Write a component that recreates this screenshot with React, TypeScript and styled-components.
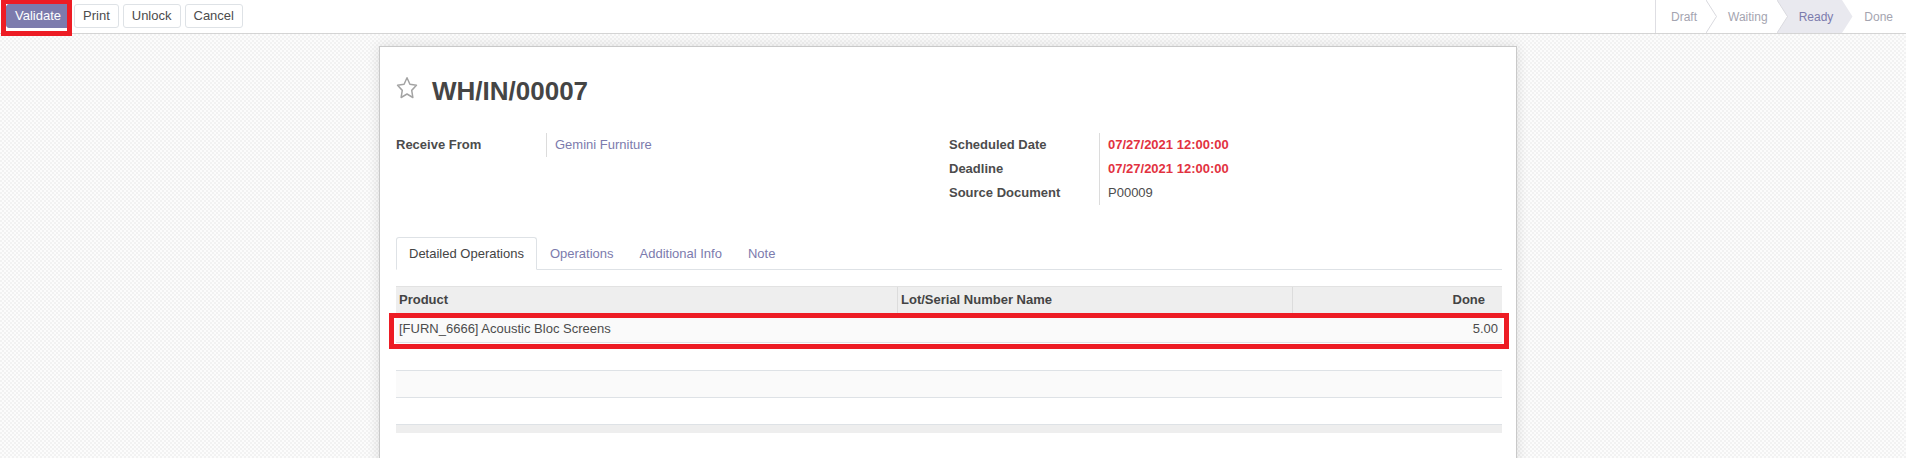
import React from "react";
import styled, { createGlobalStyle } from "styled-components";

const GlobalStyle = createGlobalStyle`
  html, body { margin: 0; padding: 0; }
  body {
    font-family: "Liberation Sans", Arial, sans-serif;
    font-size: 13px;
    color: #4c4c4c;
    background: #ffffff;
  }
  * { box-sizing: border-box; }
`;

const RED = "#ed1c24";
const PURPLE = "#7c7bad";

const Page = styled.div`
  display: flex;
  flex-direction: column;
  height: 458px;
  overflow: hidden;
`;

const ControlPanel = styled.div`
  display: flex;
  justify-content: space-between;
  align-items: stretch;
  height: 34px;
  flex-shrink: 0;
  background: #ffffff;
  border-bottom: 1px solid #d4d4d4;
  position: relative;
  z-index: 3;
`;

const ButtonBar = styled.div`
  display: flex;
  align-items: flex-start;
  gap: 4px;
  padding: 4px 0 0 6px;
`;

const Button = styled.button<{ $primary?: boolean; $highlighted?: boolean }>`
  position: relative;
  height: 24px;
  padding: 0 8px;
  font-family: inherit;
  font-size: 13px;
  line-height: 22px;
  border-radius: 3px;
  cursor: pointer;
  border: 1px solid ${(p) => (p.$primary ? PURPLE : "#dee2e6")};
  background: ${(p) => (p.$primary ? PURPLE : "#ffffff")};
  color: ${(p) => (p.$primary ? "#ffffff" : "#4c4c4c")};

  ${(p) =>
    p.$highlighted &&
    `
    &::after {
      content: "";
      position: absolute;
      top: -6px;
      left: -6px;
      right: -3px;
      bottom: -9px;
      border: 5px solid ${RED};
      pointer-events: none;
    }
  `}
`;

const StatusBar = styled.div`
  display: flex;
  border-left: 1px solid #dedee3;
`;

const StatusItem = styled.div<{ $active?: boolean; $first?: boolean; $last?: boolean }>`
  position: relative;
  display: flex;
  align-items: center;
  font-size: 12px;
  padding-left: ${(p) => (p.$first ? 15 : 22)}px;
  padding-right: ${(p) => (p.$last ? 13 : 9)}px;
  background: ${(p) => (p.$active ? "#e9e9ef" : "#ffffff")};
  color: ${(p) => (p.$active ? PURPLE : "#a4a4b0")};
`;

const StatusArrow = styled.svg`
  position: absolute;
  top: 0;
  right: -11px;
  z-index: 1;
`;

const Content = styled.div`
  flex: 1;
  display: flex;
  justify-content: center;
  align-items: flex-start;
  padding: 12px 10px 0 0;
  background-color: #f8f8f8;
  background-image: repeating-conic-gradient(#f2f2f2 0 25%, #fcfcfc 0 50%);
  background-size: 4px 4px;
  overflow: hidden;
`;

const Sheet = styled.div`
  width: 1138px;
  flex-shrink: 0;
  background: #ffffff;
  border: 1px solid #c9c9c9;
  box-shadow: 0 0 12px rgba(0, 0, 0, 0.12);
  padding: 28px 14px 80px 16px;
`;

const TitleRow = styled.div`
  display: flex;
  align-items: flex-start;
  gap: 14px;
`;

const StarIcon = styled.svg`
  margin-top: 1px;
  flex-shrink: 0;
`;

const Title = styled.h1`
  margin: 0;
  font-size: 26px;
  line-height: 32px;
  font-weight: bold;
  color: #454545;
`;

const FieldsGrid = styled.div`
  display: grid;
  grid-template-columns: 1fr 1fr;
  margin-top: 26px;
`;

const FieldTable = styled.div`
  display: grid;
  grid-template-columns: 151px 1fr;
  align-content: start;
`;

const Label = styled.div`
  font-weight: bold;
  line-height: 24px;
  border-right: 1px solid #dcdcdc;
  color: #4c4c4c;
`;

const Value = styled.div<{ $tone?: "link" | "danger" }>`
  line-height: 24px;
  padding-left: 8px;
  color: ${(p) => (p.$tone === "link" ? PURPLE : p.$tone === "danger" ? "#e2323f" : "#4c4c4c")};
  font-weight: ${(p) => (p.$tone === "danger" ? "bold" : "normal")};
`;

const TabNav = styled.div`
  display: flex;
  margin-top: 32px;
  border-bottom: 1px solid #dee2e6;
`;

const Tab = styled.div<{ $active?: boolean }>`
  padding: 7px 12px 6px;
  line-height: 18px;
  margin-bottom: -1px;
  border: 1px solid transparent;
  border-radius: 3px 3px 0 0;
  border-color: ${(p) => (p.$active ? "#dee2e6 #dee2e6 #ffffff" : "transparent")};
  background: ${(p) => (p.$active ? "#ffffff" : "transparent")};
  color: ${(p) => (p.$active ? "#444444" : PURPLE)};
`;

const Table = styled.div`
  margin-top: 16px;
`;

const COLUMNS = "501px 395px 210px";

const HeaderRow = styled.div`
  display: grid;
  grid-template-columns: ${COLUMNS};
  height: 27px;
  background: #eeeeee;
  border-top: 1px solid #e2e2e2;
  font-weight: bold;
  color: #444444;
`;

const HeaderCell = styled.div<{ $align?: "right"; $divided?: boolean }>`
  line-height: 26px;
  padding: 0 ${(p) => (p.$align === "right" ? 17 : 3)}px 0 3px;
  text-align: ${(p) => p.$align ?? "left"};
  border-left: ${(p) => (p.$divided ? "1px solid #dcdcdc" : "none")};
`;

const BodyRow = styled.div<{ $striped?: boolean; $height: number; $highlighted?: boolean }>`
  position: relative;
  display: grid;
  grid-template-columns: ${COLUMNS};
  height: ${(p) => p.$height}px;
  border-top: 1px solid #dee2e6;
  background: ${(p) => (p.$striped ? "#fafafa" : "#ffffff")};
  line-height: ${(p) => p.$height - 2}px;

  ${(p) =>
    p.$highlighted &&
    `
    &::after {
      content: "";
      position: absolute;
      top: -1px;
      left: -7px;
      right: -7px;
      bottom: -7px;
      border: 5px solid ${RED};
      pointer-events: none;
      z-index: 2;
    }
  `}
`;

const BodyCell = styled.div<{ $align?: "right" }>`
  padding: 1px 4px 0 3px;
  text-align: ${(p) => p.$align ?? "left"};
  color: #4c4c4c;
`;

const TableFooter = styled.div`
  height: 9px;
  background: #eeeeee;
  border-top: 1px solid #dee2e6;
`;

const statuses = [
  { name: "Draft" },
  { name: "Waiting" },
  { name: "Ready", active: true },
  { name: "Done" },
];

function Arrow({ active }: { active?: boolean }) {
  return (
    <StatusArrow width="11" height="33" viewBox="0 0 11 33">
      <polygon points="0,0 10.5,16.5 0,33" fill={active ? "#e9e9ef" : "#ffffff"} />
      {!active && (
        <polyline points="0,0 10.5,16.5 0,33" fill="none" stroke="#d9d9df" strokeWidth="1" />
      )}
    </StatusArrow>
  );
}

function Star() {
  return (
    <StarIcon width="22" height="24" viewBox="1 1 22 22" preserveAspectRatio="none">
      <path
        d="M12 2.6l2.9 5.95 6.55.95-4.74 4.62 1.12 6.52L12 17.56l-5.85 3.08 1.12-6.52L2.55 9.5l6.55-.95L12 2.6z"
        fill="none"
        stroke="#a3a3a3"
        strokeWidth="1.5"
        strokeLinejoin="round"
      />
    </StarIcon>
  );
}

export default function App() {
  return (
    <>
      <GlobalStyle />
      <Page>
        <ControlPanel>
          <ButtonBar>
            <Button $primary $highlighted>Validate</Button>
            <Button>Print</Button>
            <Button>Unlock</Button>
            <Button>Cancel</Button>
          </ButtonBar>
          <StatusBar>
            {statuses.map((s, i) => {
              const last = i === statuses.length - 1;
              return (
                <StatusItem key={s.name} $active={s.active} $first={i === 0} $last={last}>
                  {s.name}
                  {!last && <Arrow active={s.active} />}
                </StatusItem>
              );
            })}
          </StatusBar>
        </ControlPanel>

        <Content>
          <Sheet>
            <TitleRow>
              <Star />
              <Title>WH/IN/00007</Title>
            </TitleRow>

            <FieldsGrid>
              <FieldTable>
                <Label>Receive From</Label>
                <Value $tone="link">Gemini Furniture</Value>
              </FieldTable>
              <FieldTable>
                <Label>Scheduled Date</Label>
                <Value $tone="danger">07/27/2021 12:00:00</Value>
                <Label>Deadline</Label>
                <Value $tone="danger">07/27/2021 12:00:00</Value>
                <Label>Source Document</Label>
                <Value>P00009</Value>
              </FieldTable>
            </FieldsGrid>

            <TabNav>
              <Tab $active>Detailed Operations</Tab>
              <Tab>Operations</Tab>
              <Tab>Additional Info</Tab>
              <Tab>Note</Tab>
            </TabNav>

            <Table>
              <HeaderRow>
                <HeaderCell>Product</HeaderCell>
                <HeaderCell $divided>Lot/Serial Number Name</HeaderCell>
                <HeaderCell $divided $align="right">Done</HeaderCell>
              </HeaderRow>
              <BodyRow $striped $height={29} $highlighted>
                <BodyCell>[FURN_6666] Acoustic Bloc Screens</BodyCell>
                <BodyCell />
                <BodyCell $align="right">5.00</BodyCell>
              </BodyRow>
              <BodyRow $height={28} />
              <BodyRow $striped $height={27} />
              <BodyRow $height={27} />
              <TableFooter />
            </Table>
          </Sheet>
        </Content>
      </Page>
    </>
  );
}
